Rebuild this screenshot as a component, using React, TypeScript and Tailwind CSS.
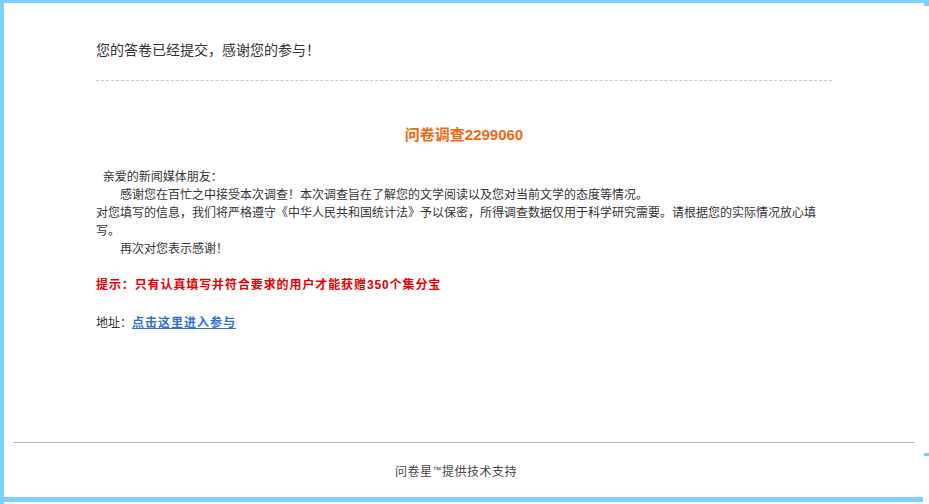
import React from 'react';

const App: React.FC = () => {
    return (
        <div
            className="relative w-[929px] h-[504px] bg-white flex flex-col border-l-4 border-t-[3px] border-[#7dd0f9] text-[#333] overflow-hidden"
            style={{ fontFamily: '"Liberation Sans", "Noto Sans CJK SC", sans-serif' }}
        >
            {/* small marks on the right edge */}
            <div className="absolute right-0 top-0 w-[5px] h-[3px] bg-[#7dd0f9]"></div>
            <div className="absolute right-0 top-[450px] w-[5px] h-[3px] bg-[#7dd0f9]"></div>

            <div className="ml-[92px] w-[736px]">
                <h2 className="mt-[37px] text-[14px] leading-[20px] font-normal">您的答卷已经提交，感谢您的参与！</h2>
                <div className="mt-[20px] border-t border-dashed border-[#c8c8c8]"></div>

                <div className="mt-[44px] text-center text-[15px] leading-[20px] font-bold text-[#f06a10]">问卷调查2299060</div>

                <div className="mt-[23px] text-[12px] leading-[18px]">
                    <div>&nbsp;&nbsp;亲爱的新闻媒体朋友：</div>
                    <div>{'\u3000\u3000'}感谢您在百忙之中接受本次调查！本次调查旨在了解您的文学阅读以及您对当前文学的态度等情况。</div>
                    <div>对您填写的信息，我们将严格遵守《中华人民共和国统计法》予以保密，所得调查数据仅用于科学研究需要。请根据您的实际情况放心填</div>
                    <div>写。</div>
                    <div>{'\u3000\u3000'}再次对您表示感谢！</div>
                </div>

                <div className="mt-[18px] text-[12px] leading-[18px] font-bold tracking-[0.9px] text-[#e60000]">
                    提示：只有认真填写并符合要求的用户才能获赠350个集分宝
                </div>

                <div className="mt-[20px] text-[12px] leading-[18px]">
                    地址：<a href="#" className="font-bold tracking-[1px] text-[#2f6fd4] underline">点击这里进入参与</a>
                </div>
            </div>

            <div className="mt-auto">
                <div className="ml-[9px] w-[902px] border-t border-[#b8b8b8]"></div>
                <div className="pt-[18px] pr-[21px] text-center text-[12px] leading-[18px] tracking-[0.5px] text-[#444]">
                    问卷星<span className="text-[9px] align-[3px]">™</span>提供技术支持
                </div>
                <div className="mt-[16px] w-[919px] h-[5px] bg-[#7dd0f9]"></div>
                <div className="h-[2px]"></div>
            </div>
        </div>
    );
};

export default App;
